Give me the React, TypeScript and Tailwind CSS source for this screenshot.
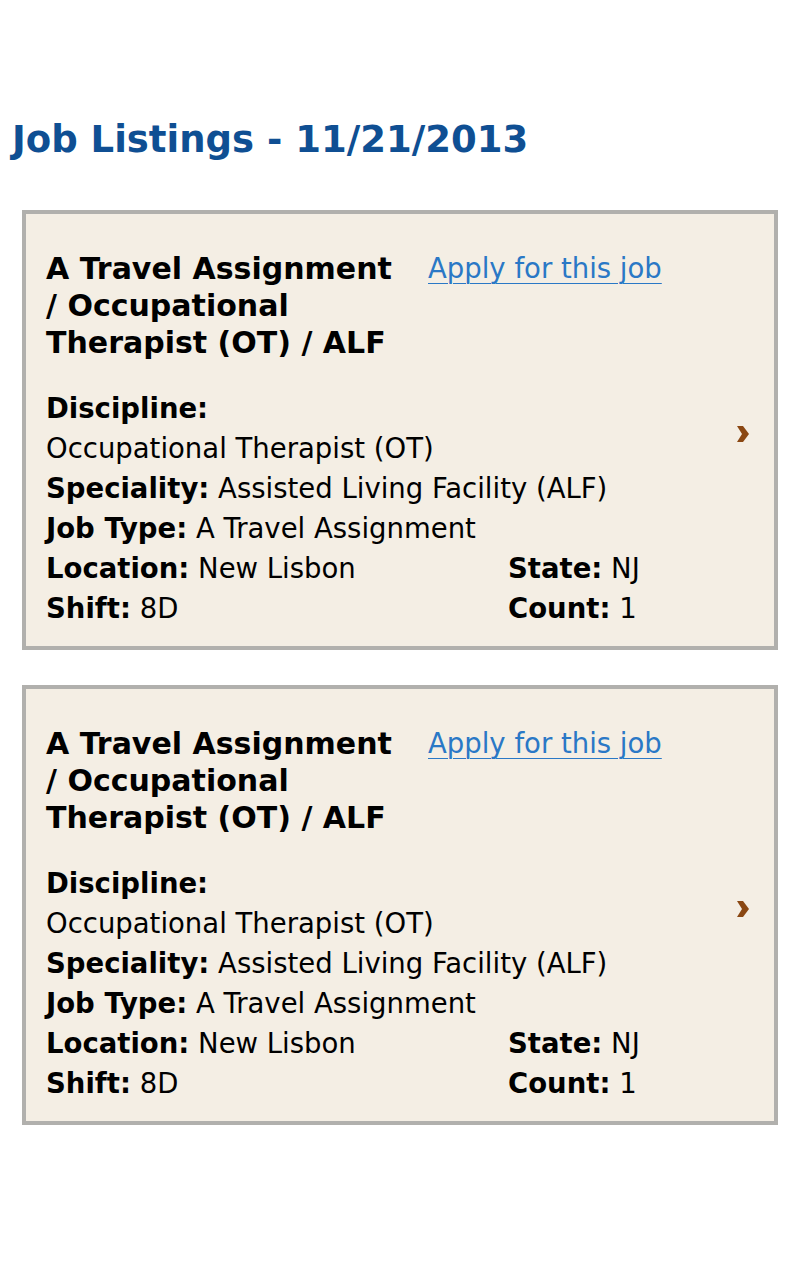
type Job = {
  title: string;
  discipline: string;
  speciality: string;
  jobType: string;
  location: string;
  state: string;
  shift: string;
  count: string;
};

const jobs: Job[] = [
  {
    title: "A Travel Assignment / Occupational Therapist (OT) / ALF",
    discipline: "Occupational Therapist (OT)",
    speciality: "Assisted Living Facility (ALF)",
    jobType: "A Travel Assignment",
    location: "New Lisbon",
    state: "NJ",
    shift: "8D",
    count: "1",
  },
  {
    title: "A Travel Assignment / Occupational Therapist (OT) / ALF",
    discipline: "Occupational Therapist (OT)",
    speciality: "Assisted Living Facility (ALF)",
    jobType: "A Travel Assignment",
    location: "New Lisbon",
    state: "NJ",
    shift: "8D",
    count: "1",
  },
];

function Arrow() {
  return (
    <svg width="14" height="18" viewBox="0 0 14 18" className="block text-[#8a4712]">
      <path d="M1 1 L7 1 L13 9 L7 17 L1 17 L6 9 Z" fill="currentColor" />
    </svg>
  );
}

function JobCard({ job }: { job: Job }) {
  return (
    <div className="flex border-4 border-[#b1b0ad] bg-[#f4eee4] pl-5 pr-6 pt-9 pb-[18px]">
      <div className="flex-1">
        <div className="flex items-start">
          <h2 className="w-[362px] text-[30px] font-bold leading-[37px] text-black">{job.title}</h2>
          <a href="#" className="ml-5 text-[27.5px] leading-[37px] text-[#2a78c6] underline underline-offset-[5px] decoration-1">
            Apply for this job
          </a>
        </div>
        <div className="mt-[27px] text-[27.5px] leading-[40px] text-black">
          <div className="font-bold">Discipline:</div>
          <div>{job.discipline}</div>
          <div>
            <span className="font-bold">Speciality:</span> {job.speciality}
          </div>
          <div>
            <span className="font-bold">Job Type:</span> {job.jobType}
          </div>
          <div className="grid grid-cols-[462px_1fr]">
            <div>
              <span className="font-bold">Location:</span> {job.location}
            </div>
            <div>
              <span className="font-bold">State:</span> {job.state}
            </div>
            <div>
              <span className="font-bold">Shift:</span> {job.shift}
            </div>
            <div>
              <span className="font-bold">Count:</span> {job.count}
            </div>
          </div>
        </div>
      </div>
      <div className="flex items-center pb-[10px]">
        <Arrow />
      </div>
    </div>
  );
}

export default function App() {
  return (
    <div className="min-h-[1280px] bg-white font-['DejaVu_Sans','Verdana',sans-serif]">
      <div className="pt-[118px]">
        <h1 className="px-3 text-[37px] font-bold leading-[44px] text-[#0f4f93]">Job Listings - 11/21/2013</h1>
        <div className="mt-[48px] flex flex-col gap-[35px] px-[22px]">
          {jobs.map((job, i) => (
            <JobCard key={i} job={job} />
          ))}
        </div>
      </div>
    </div>
  );
}
